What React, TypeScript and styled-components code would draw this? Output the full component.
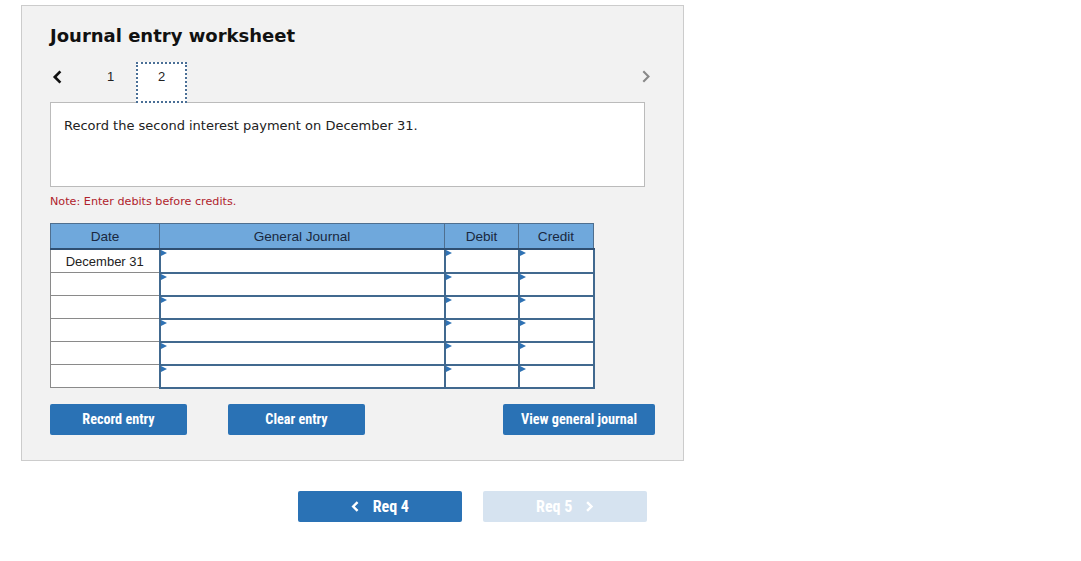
import { createGlobalStyle, styled } from "styled-components";

const GlobalStyle = createGlobalStyle`
  body {
    margin: 0;
    background: #ffffff;
    font-family: "DejaVu Sans", Verdana, sans-serif;
  }
`;

const Page = styled.div`
  padding: 5px 0 0 21px;
  width: 663px;
`;

const Panel = styled.div`
  background: #f2f2f2;
  border: 1px solid #cccccc;
  padding: 19px 28px 25px 28px;
`;

const Title = styled.h2`
  margin: 0;
  font-size: 18px;
  line-height: 22px;
  font-weight: 700;
  color: #111111;
`;

const NavRow = styled.div`
  display: flex;
  align-items: stretch;
  height: 41px;
  margin-top: 15px;
`;

const Chevron = styled.div<{ $muted?: boolean }>`
  display: flex;
  align-items: flex-start;
  justify-content: ${(p) => (p.$muted ? "flex-end" : "flex-start")};
  box-sizing: border-box;
  padding-top: 8px;
  padding-left: ${(p) => (p.$muted ? "0" : "2px")};
  padding-right: ${(p) => (p.$muted ? "4px" : "0")};
  width: ${(p) => (p.$muted ? "16px" : "35px")};
  margin-left: ${(p) => (p.$muted ? "auto" : "0")};
  color: ${(p) => (p.$muted ? "#888888" : "#111111")};
  svg {
    display: block;
  }
`;

const Tab = styled.div<{ $active?: boolean }>`
  width: 51px;
  display: flex;
  align-items: flex-start;
  justify-content: center;
  box-sizing: border-box;
  padding-top: ${(p) => (p.$active ? "5px" : "7px")};
  font-family: "Liberation Sans", Arial, sans-serif;
  font-size: 13px;
  line-height: 15px;
  color: #222222;
  background: ${(p) => (p.$active ? "#ffffff" : "transparent")};
  border: ${(p) => (p.$active ? "2px dotted #4a6f96" : "none")};
  position: relative;
  z-index: 1;
`;

const Prompt = styled.div`
  width: 595px;
  height: 85px;
  box-sizing: border-box;
  margin-top: -1px;
  background: #ffffff;
  border: 1px solid #bbbbbb;
  padding: 15px 13px;
  font-size: 13px;
  color: #222222;
`;

const Note = styled.div`
  margin-top: 8px;
  font-size: 11.2px;
  line-height: 14px;
  color: #b0222c;
`;

const Grid = styled.table`
  margin-top: 14px;
  border-collapse: collapse;
  table-layout: fixed;
  font-family: "Liberation Sans", Arial, sans-serif;
  font-size: 13px;
`;

const HeadCell = styled.th<{ $w: number }>`
  width: ${(p) => p.$w}px;
  height: 24px;
  padding: 0;
  background: #6fa8dc;
  border: 1px solid #4f6f8f;
  border-bottom: 2px solid #2f4f72;
  font-weight: 400;
  font-size: 13.6px;
  color: #1a2840;
  text-align: center;
`;

const DateCell = styled.td`
  height: 22px;
  padding: 0;
  background: #ffffff;
  border: 1px solid #8a8a8a;
  text-align: center;
  color: #222222;
`;

const EntryCell = styled.td`
  height: 20px;
  padding: 0;
  background: #ffffff;
  border: 2px solid #41698f;
  position: relative;
  &::before {
    content: "";
    position: absolute;
    left: 0;
    top: 0;
    border-top: 3.5px solid transparent;
    border-bottom: 3.5px solid transparent;
    border-left: 6px solid #2f72b4;
  }
`;

const ButtonRow = styled.div`
  display: flex;
  margin-top: 15px;
  width: 606px;
`;

const ActionButton = styled.button<{ $w: number; $gap?: number }>`
  width: ${(p) => p.$w}px;
  height: 31px;
  margin-left: ${(p) => (p.$gap ?? 0)}px;
  background: #2a72b5;
  border: none;
  border-radius: 2px;
  color: #ffffff;
  font-family: "Liberation Sans Narrow", "Roboto Condensed", "Liberation Sans", sans-serif;
  font-weight: 700;
  font-size: 14.2px;
  cursor: pointer;
`;

const ReqRow = styled.div`
  display: flex;
  justify-content: flex-end;
  gap: 21px;
  width: 663px;
  box-sizing: border-box;
  padding-right: 37px;
  margin-top: 30px;
`;

const ReqButton = styled.button<{ $disabled?: boolean }>`
  width: 164px;
  height: 31px;
  display: flex;
  align-items: center;
  justify-content: center;
  gap: 14px;
  background: ${(p) => (p.$disabled ? "#d6e3f0" : "#2a72b5")};
  border: none;
  border-radius: 2px;
  color: #ffffff;
  font-family: "Liberation Sans Narrow", "Roboto Condensed", "Liberation Sans", sans-serif;
  font-weight: 700;
  font-size: 16px;
  svg {
    display: block;
  }
`;

const ChevronLeftIcon = ({ size = 14, stroke = 2.4 }: { size?: number; stroke?: number }) => (
  <svg width={size * 0.7} height={size} viewBox="0 0 7 10" fill="none">
    <path d="M6 1L2 5L6 9" stroke="currentColor" strokeWidth={stroke} strokeLinejoin="miter" />
  </svg>
);

const ChevronRightIcon = ({ size = 14, stroke = 2.4 }: { size?: number; stroke?: number }) => (
  <svg width={size * 0.7} height={size} viewBox="0 0 7 10" fill="none">
    <path d="M1 1L5 5L1 9" stroke="currentColor" strokeWidth={stroke} strokeLinejoin="miter" />
  </svg>
);

const rows = ["December 31", "", "", "", "", ""];

const App = () => {
  return (
    <>
      <GlobalStyle />
      <Page>
        <Panel>
          <Title>Journal entry worksheet</Title>
          <NavRow>
            <Chevron>
              <ChevronLeftIcon size={14} stroke={1.9} />
            </Chevron>
            <Tab>1</Tab>
            <Tab $active>2</Tab>
            <Chevron $muted>
              <ChevronRightIcon size={13} stroke={1.6} />
            </Chevron>
          </NavRow>
          <Prompt>Record the second interest payment on December 31.</Prompt>
          <Note>Note: Enter debits before credits.</Note>
          <Grid>
            <thead>
              <tr>
                <HeadCell $w={108}>Date</HeadCell>
                <HeadCell $w={284}>General Journal</HeadCell>
                <HeadCell $w={73}>Debit</HeadCell>
                <HeadCell $w={74}>Credit</HeadCell>
              </tr>
            </thead>
            <tbody>
              {rows.map((d, i) => (
                <tr key={i}>
                  <DateCell>{d}</DateCell>
                  <EntryCell />
                  <EntryCell />
                  <EntryCell />
                </tr>
              ))}
            </tbody>
          </Grid>
          <ButtonRow>
            <ActionButton $w={137}>Record entry</ActionButton>
            <ActionButton $w={137} $gap={41}>
              Clear entry
            </ActionButton>
            <ActionButton $w={152} $gap={138}>
              View general journal
            </ActionButton>
          </ButtonRow>
        </Panel>
        <ReqRow>
          <ReqButton>
            <ChevronLeftIcon size={11} stroke={2.2} />
            <span>Req 4</span>
          </ReqButton>
          <ReqButton $disabled>
            <span>Req 5</span>
            <ChevronRightIcon size={11} stroke={2.2} />
          </ReqButton>
        </ReqRow>
      </Page>
    </>
  );
};

export default App;
